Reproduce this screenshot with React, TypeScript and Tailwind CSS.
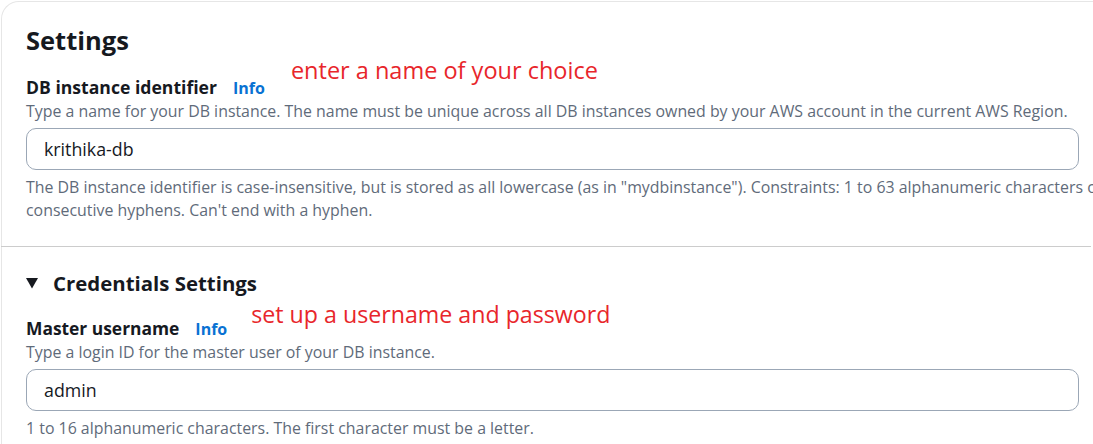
import React from "react";

const F = { fontFamily: '"Open Sans", "Noto Sans", Arial, sans-serif' };

function Info() {
  return <span className="text-[16px] font-bold text-[#0972d3] leading-[24px]">Info</span>;
}

export default function App() {
  return (
    <div className="w-[1093px] h-[444px] overflow-hidden bg-white" style={F}>
      <div className="w-[1200px] h-[460px] ml-[1px] mt-[1px] rounded-tl-[18px] border-l border-t border-[#e6e6e6] bg-white">
        <div className="pl-[24px] pt-[22px] w-[1200px]">
          <h2 className="text-[25.5px] leading-[32px] font-bold text-[#16191f]">Settings</h2>
          <div className="mt-[19px] flex items-center h-[24px]">
            <span className="text-[17.6px] font-bold text-[#16191f] leading-[24px]">DB instance identifier</span>
            <span className="ml-[16px] relative top-[1px]"><Info /></span>
            <span className="ml-[26px] text-[23.5px] text-[#e8262b] leading-[24px] relative -top-[17px]">enter a name of your choice</span>
          </div>
          <p className="text-[15.9px] leading-[24px] text-[#5f6b7a] whitespace-nowrap">
            Type a name for your DB instance. The name must be unique across all DB instances owned by your AWS account in the current AWS Region.
          </p>
          <div className="mt-[5px] w-[1053px] h-[42px] rounded-[10px] border border-[#9ba7b6] flex items-center pl-[17px] text-[17.8px] text-[#16191f]">
            krithika-db
          </div>
          <p className="mt-[6px] text-[15.9px] leading-[23px] text-[#5f6b7a] whitespace-nowrap">
            The DB instance identifier is case-insensitive, but is stored as all lowercase (as in "mydbinstance"). Constraints: 1 to 63 alphanumeric characters or hyphens. First character must be a letter. Can't contain two
            <br />
            consecutive hyphens. Can't end with a hyphen.
          </p>
        </div>
        <div className="mt-[24px] h-0 border-t border-[#cccccc] w-[1090px] -ml-[1px]" />
        <div className="pl-[24px] pt-[22px]">
          <div className="flex items-center h-[28px]">
            <svg width="12" height="11" viewBox="0 0 12 11" className="mr-[15px]">
              <path d="M0 0 H12 L6 10.5 Z" fill="#16191f" />
            </svg>
            <span className="text-[20.4px] font-bold text-[#16191f] leading-[28px]">Credentials Settings</span>
          </div>
          <div className="mt-[19px] flex items-center h-[24px]">
            <span className="text-[17.4px] font-bold text-[#16191f] leading-[24px]">Master username</span>
            <span className="ml-[16px] relative top-[1px]"><Info /></span>
            <span className="ml-[24px] text-[23.2px] text-[#e8262b] leading-[24px] relative -top-[14px]">set up a username and password</span>
          </div>
          <p className="text-[15.9px] leading-[24px] text-[#5f6b7a] whitespace-nowrap">
            Type a login ID for the master user of your DB instance.
          </p>
          <div className="mt-[5px] w-[1053px] h-[42px] rounded-[10px] border border-[#9ba7b6] flex items-center pl-[17px] text-[17.8px] text-[#16191f]">
            admin
          </div>
          <p className="mt-[6px] text-[15.9px] leading-[23px] text-[#5f6b7a] whitespace-nowrap">
            1 to 16 alphanumeric characters. The first character must be a letter.
          </p>
        </div>
      </div>
    </div>
  );
}
